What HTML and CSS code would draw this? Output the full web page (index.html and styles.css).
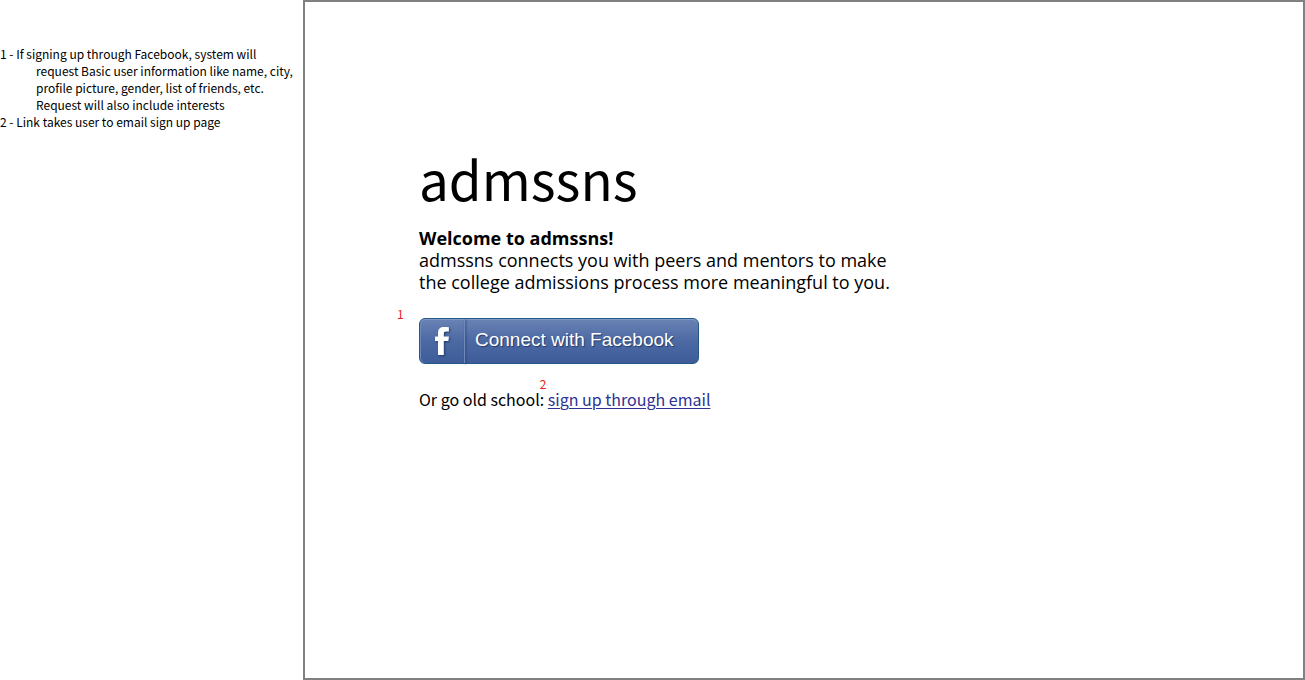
FILE: index.html
```html
<!DOCTYPE html>
<html lang="en">
<head>
<meta charset="utf-8">
<title>admssns</title>
<link rel="stylesheet" href="styles.css">
</head>
<body>
<div class="board">
  <aside class="notes">
    <p class="note">1 - If signing up through Facebook, system will<br>request Basic user information like name, city,<br>profile picture, gender, list of friends, etc.<br>Request will also include interests</p>
    <p class="note">2 - Link takes user to email sign up page</p>
  </aside>
  <main class="screen">
    <h1 class="brand">admssns</h1>
    <section class="intro">
      <h2 class="welcome">Welcome to admssns!</h2>
      <p class="pitch">admssns connects you with peers and mentors to make<br>the college admissions process more meaningful to you.</p>
    </section>
    <div class="connect">
      <span class="marker marker-connect">1</span>
      <button class="facebook" type="button">
        <span class="facebook-icon">
          <svg width="16" height="30" viewBox="0 0 16 30" aria-hidden="true"><path d="M4 29V15H1v-4.500h3V7.200C4 2.800 6.200 1 10 1c1.800 0 3.400.1 4.900.3v4.100h-2.500c-1.900 0-2.600.7-2.600 2.300v2.800h5.100L14.400 15H9.800v14z" fill="#fff"/></svg>
        </span>
        <span class="facebook-label">Connect with Facebook</span>
      </button>
    </div>
    <p class="email">Or go old school: <span class="email-target"><span class="marker marker-email">2</span><a class="email-link" href="#email">sign up through email</a></span></p>
  </main>
</div>
</body>
</html>
```
FILE: styles.css
```css
* {
  box-sizing: border-box;
}

body,
h1,
h2,
p {
  margin: 0;
}

body {
  background: #fff;
  color: #000;
  font-family: "Noto Sans CJK SC", "Noto Sans", sans-serif;
}

.board {
  display: grid;
  grid-template-columns: 303px 1fr;
  min-height: 100vh;
}

.notes {
  padding-top: 45px;
  font-size: 12px;
  line-height: 17px;
  white-space: nowrap;
}

.note {
  padding-left: 36px;
  text-indent: -36px;
}

.screen {
  border: 2px solid #808080;
  padding: 140px 114px 40px;
}

.brand {
  font-size: 53px;
  font-weight: 400;
  line-height: 72px;
}

.intro {
  margin-top: 13px;
  font-family: "Open Sans", "Noto Sans", sans-serif;
  font-size: 18px;
  line-height: 22px;
}

.welcome {
  font-size: 18px;
  font-weight: 700;
}

.connect {
  position: relative;
  margin-top: 25px;
}

.marker {
  position: absolute;
  color: #ed1c24;
  font-size: 12px;
  line-height: 12px;
}

.marker-connect {
  top: -10px;
  left: -22px;
}

.facebook {
  display: flex;
  align-items: stretch;
  width: 280px;
  height: 46px;
  padding: 0;
  border: 1px solid #23598a;
  border-radius: 6px;
  background: linear-gradient(#6a83b5, #4c69a3 50%, #3d5c98);
  box-shadow: inset 0 1px #819ac6, inset 1px 0 #6d89b9;
  color: #fff;
  font-family: "Liberation Sans", Arial, sans-serif;
  font-size: 19px;
  text-shadow: 1px 1px 1px #203a6b;
  cursor: pointer;
}

.facebook-icon {
  display: flex;
  align-items: center;
  justify-content: center;
  width: 45px;
  border-right: 1px solid #7089b8;
  filter: drop-shadow(1px 1px 1px #203a6b);
}

.facebook-label {
  padding-left: 10px;
  line-height: 42px;
}

.email {
  margin-top: 23px;
  font-size: 16px;
  line-height: 24px;
}

.email-target {
  position: relative;
}

.marker-email {
  top: -9px;
  left: -8px;
}

.email-link {
  color: #2e3192;
  text-decoration-thickness: 1px;
  text-underline-offset: 2px;
}
```
